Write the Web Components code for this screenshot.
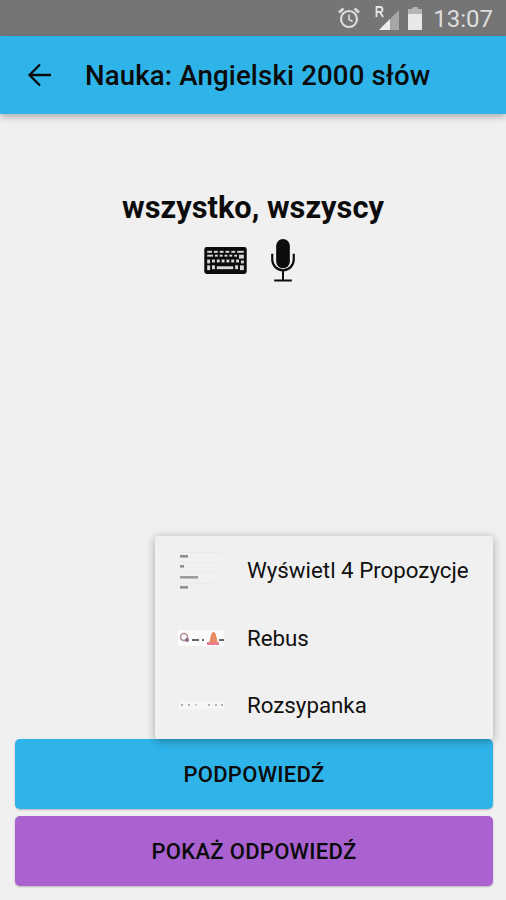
<!DOCTYPE html>
<html lang="pl">
<head>
<meta charset="utf-8">
<title>Nauka</title>
<style>
    html, body { margin: 0; height: 100%; }
    body { background: #f0f0f0; font-family: Roboto, "Liberation Sans", sans-serif; }
</style>
</head>
<body>
<learn-screen>
    <status-bar slot="status" time="13:07"></status-bar>
    <app-bar slot="bar" title="Nauka: Angielski 2000 słów"></app-bar>
    <word-prompt slot="word" word="wszystko, wszyscy"></word-prompt>
    <hint-menu slot="menu">
        <hint-item label="Wyświetl 4 Propozycje" kind="list"></hint-item>
        <hint-item label="Rebus" kind="rebus"></hint-item>
        <hint-item label="Rozsypanka" kind="dots"></hint-item>
    </hint-menu>
    <action-button slot="actions" color="#2fb4e9">PODPOWIEDŹ</action-button>
    <action-button slot="actions" color="#a962cf">POKAŻ ODPOWIEDŹ</action-button>
</learn-screen>

<script>
class LearnScreen extends HTMLElement {
    constructor() {
        super();
        this.attachShadow({ mode: "open" });
        this.shadowRoot.innerHTML = `
            <style>
                :host { display: flex; flex-direction: column; height: 900px; position: relative; overflow: hidden; background: #f0f0f0; }
                .main { flex: 1; }
                .actions { display: flex; flex-direction: column; gap: 7px; padding: 0 13px 14px 15px; }
                .overlay { position: absolute; left: 155px; top: 536px; }
            </style>
            <slot name="status"></slot>
            <slot name="bar"></slot>
            <div class="main"><slot name="word"></slot></div>
            <div class="actions"><slot name="actions"></slot></div>
            <div class="overlay"><slot name="menu"></slot></div>
        `;
    }
}

class StatusBar extends HTMLElement {
    constructor() {
        super();
        this.attachShadow({ mode: "open" });
        this.shadowRoot.innerHTML = `
            <style>
                :host { display: flex; align-items: center; justify-content: flex-end; height: 36px; background: #757575; color: #e4e4e4; padding-right: 13px; box-sizing: border-box; }
                svg { display: block; }
                .alarm { margin-right: 14px; }
                .signal { margin-right: 8px; }
                .battery { margin-right: 10px; }
                .time { font-size: 24px; line-height: 36px; color: #dedede; position: relative; top: 1px; }
            </style>
            <svg class="alarm" width="24" height="24" viewBox="0 0 24 24" fill="none" stroke="#dcdcdc">
                <circle cx="12" cy="13" r="8" stroke-width="2.2"/>
                <path d="M12 8.5v5l3.6 2" stroke-width="1.6"/>
                <path d="M2 6.5l4.5-4M22 6.5l-4.5-4" stroke-width="2.8"/>
            </svg>
            <svg class="signal" width="25" height="26" viewBox="0 0 25 26">
                <path d="M24 5v20h-20z" fill="#a6a6a6"/>
                <path d="M15 25h-11l11-11z" fill="#ededed"/>
                <path d="M1.5 12v-10h3.5q2.500 0 2.500 2.500t-2.500 2.500h-3.500M5 7l3 5" fill="none" stroke="#e4e4e4" stroke-width="1.8"/>
            </svg>
            <svg class="battery" width="15" height="23" viewBox="0 0 15 23">
                <path d="M5 0h5v2h4v21h-14v-21h4z" fill="#b5b5b5"/>
                <rect y="7" width="14" height="16" fill="#e8e8e8"/>
            </svg>
            <span class="time"></span>
        `;
    }

    connectedCallback() {
        this.shadowRoot.querySelector(".time").textContent = this.getAttribute("time") || "";
    }
}

class AppBar extends HTMLElement {
    constructor() {
        super();
        this.attachShadow({ mode: "open" });
        this.shadowRoot.innerHTML = `
            <style>
                :host { display: flex; align-items: center; height: 78px; background: #2fb4e9; color: #0b0b0b; box-shadow: 0 3px 7px rgba(0,0,0,.28); position: relative; padding-left: 27px; box-sizing: border-box; }
                svg { display: block; margin-right: 34px; }
                h1 { margin: 0; font-size: 27.6px; font-weight: 500; letter-spacing: .15px; }
            </style>
            <svg width="24" height="24" viewBox="0 0 24 24" fill="none" stroke="#0b0b0b" stroke-width="2.3">
                <path d="M24 12H3M13 1.5L2.5 12 13 22.5"/>
            </svg>
            <h1></h1>
        `;
    }

    connectedCallback() {
        this.shadowRoot.querySelector("h1").textContent = this.getAttribute("title") || "";
    }
}

class WordPrompt extends HTMLElement {
    constructor() {
        super();
        this.attachShadow({ mode: "open" });
        this.shadowRoot.innerHTML = `
            <style>
                :host { display: flex; flex-direction: column; align-items: center; padding-top: 77px; }
                .word { font-size: 30.8px; font-weight: 700; line-height: 34px; color: #0c0c0c; }
                .icons { display: flex; align-items: center; gap: 23px; margin-top: 14px; margin-right: 7px; }
                svg { display: block; }
            </style>
            <div class="word"></div>
            <div class="icons">
                <svg width="43" height="27" viewBox="0 0 44 28">
                    <rect width="44" height="28" rx="2.5" fill="#0c0c0c"/>
                    <g fill="#d8d8d8">
                        <rect x="3" y="4" width="5" height="2"/><rect x="10" y="4" width="4" height="2"/><rect x="16" y="4" width="4" height="2"/><rect x="22" y="4" width="4" height="2"/><rect x="28" y="4" width="4" height="2"/><rect x="34" y="4" width="7" height="2"/>
                        <rect x="3" y="8" width="6" height="2"/><rect x="11" y="8" width="3" height="2"/><rect x="16" y="8" width="3" height="2"/><rect x="21" y="8" width="3" height="2"/><rect x="26" y="8" width="3" height="2"/><rect x="31" y="8" width="3" height="2"/><rect x="36" y="8" width="5" height="4"/>
                        <rect x="3" y="13" width="3" height="4"/><rect x="8" y="13" width="3" height="3"/><rect x="13" y="13" width="3" height="3"/><rect x="18" y="13" width="3" height="3"/><rect x="23" y="13" width="3" height="3"/><rect x="28" y="13" width="3" height="3"/><rect x="33" y="13" width="3" height="3"/><rect x="38" y="14" width="3" height="3"/>
                        <rect x="3" y="19" width="3" height="5"/><rect x="8" y="19" width="3" height="4"/><rect x="13" y="20" width="17" height="3"/><rect x="32" y="19" width="3" height="4"/><rect x="37" y="19" width="4" height="5"/>
                    </g>
                </svg>
                <svg width="26" height="43" viewBox="0 0 26 44" fill="none" stroke="#0c0c0c">
                    <rect x="6" y="0" width="14" height="30" rx="7" fill="#0c0c0c" stroke="none"/>
                    <path d="M2 15v6a11 11 0 0 0 22 0v-6" stroke-width="2.2"/>
                    <path d="M13 32v10M4 42.5h18" stroke-width="2"/>
                </svg>
            </div>
        `;
    }

    connectedCallback() {
        this.shadowRoot.querySelector(".word").textContent = this.getAttribute("word") || "";
    }
}

class HintMenu extends HTMLElement {
    constructor() {
        super();
        this.attachShadow({ mode: "open" });
        this.shadowRoot.innerHTML = `
            <style>
                :host { display: flex; flex-direction: column; width: 338px; height: 203px; background: #f0f0f0; border-radius: 2px; box-shadow: 0 2px 10px rgba(0,0,0,.32); }
            </style>
            <slot></slot>
        `;
    }
}

const thumbs = {
    list: `
        <svg width="46" height="42" viewBox="0 0 46 42">
            <g fill="#e9e9e9"><rect y="3" width="44" height="1"/><rect y="13" width="42" height="1"/><rect y="23" width="42" height="1"/><rect y="34" width="36" height="1"/></g>
            <g fill="#777"><rect x="2" y="6" width="8" height="2.6" opacity=".8"/><rect x="2" y="16" width="4" height="2.6" opacity=".8"/><rect x="2" y="27" width="18" height="2.6" opacity=".7"/><rect x="2" y="37" width="8" height="2.6" opacity=".8"/></g>
        </svg>`,
    rebus: `
        <svg width="46" height="16" viewBox="0 0 46 16">
            <rect width="46" height="16" fill="#fbfbfb"/>
            <circle cx="6" cy="7" r="3.5" fill="none" stroke="#b08a94" stroke-width="1.5"/>
            <circle cx="9" cy="10" r="2" fill="#8a6a88"/>
            <g fill="#666"><rect x="14" y="9" width="7" height="2"/><rect x="24" y="9" width="2" height="2"/><rect x="41" y="9" width="5" height="2"/></g>
            <path d="M31 14l2-9q.5-2 2-3h1q1.5 1 2 3l2 9z" fill="#e88a60"/>
            <rect x="29" y="12" width="12" height="3" fill="#ea7f90"/>
        </svg>`,
    dots: `
        <svg width="46" height="8" viewBox="0 0 46 8">
            <rect width="46" height="8" fill="#f6f6f6"/>
            <g fill="#9a9a9a"><circle cx="4" cy="4" r="1.1"/><circle cx="11" cy="4" r="1"/><circle cx="18" cy="4" r=".8"/><circle cx="31" cy="4" r="1"/><circle cx="38" cy="4" r="1"/><circle cx="44" cy="4" r="1"/></g>
        </svg>`
};

class HintItem extends HTMLElement {
    constructor() {
        super();
        this.attachShadow({ mode: "open" });
        this.shadowRoot.innerHTML = `
            <style>
                :host { display: flex; align-items: center; flex: 1; color: #111; font-size: 22.3px; padding-left: 23px; }
                .thumb { width: 46px; margin-right: 23px; display: flex; justify-content: center; }
                svg { display: block; }
            </style>
            <div class="thumb"></div>
            <span class="label"></span>
        `;
    }

    connectedCallback() {
        this.shadowRoot.querySelector(".thumb").innerHTML = thumbs[this.getAttribute("kind")] || "";
        this.shadowRoot.querySelector(".label").textContent = this.getAttribute("label") || "";
    }
}

class ActionButton extends HTMLElement {
    constructor() {
        super();
        this.attachShadow({ mode: "open" });
        this.shadowRoot.innerHTML = `
            <style>
                :host { display: flex; align-items: center; justify-content: center; height: 70px; border-radius: 5px; box-shadow: 0 1px 2px rgba(0,0,0,.25); font-size: 22px; font-weight: 500; color: #0b0b0b; letter-spacing: .3px; }
            </style>
            <slot></slot>
        `;
    }

    connectedCallback() {
        this.style.background = this.getAttribute("color") || "#ccc";
    }
}

customElements.define("learn-screen", LearnScreen);
customElements.define("status-bar", StatusBar);
customElements.define("app-bar", AppBar);
customElements.define("word-prompt", WordPrompt);
customElements.define("hint-menu", HintMenu);
customElements.define("hint-item", HintItem);
customElements.define("action-button", ActionButton);
</script>
</body>
</html>
